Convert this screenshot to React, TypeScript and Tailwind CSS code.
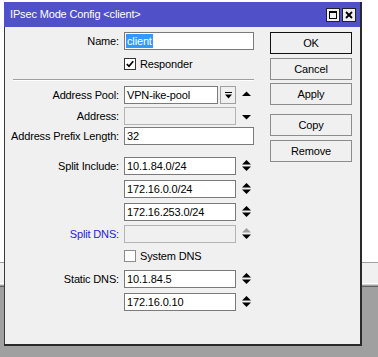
import React from "react";

const Up = ({ c = "#000" }: { c?: string }) => (
  <svg width="9" height="5" viewBox="0 0 9 5">
    <polygon points="0,5 4.5,0.5 9,5" fill={c} />
  </svg>
);
const Down = ({ c = "#000" }: { c?: string }) => (
  <svg width="9" height="5" viewBox="0 0 9 5">
    <polygon points="0,0 4.5,4.5 9,0" fill={c} />
  </svg>
);
const Pair = ({ up = "#000", down = "#000" }: { up?: string; down?: string }) => (
  <svg width="9" height="11" viewBox="0 0 9 11">
    <polygon points="0,4.5 4.5,0 9,4.5" fill={up} />
    <polygon points="0,6.5 4.5,11 9,6.5" fill={down} />
  </svg>
);

function Row({
  label,
  labelClass = "text-black",
  children,
  className = "",
}: {
  label?: string;
  labelClass?: string;
  children: React.ReactNode;
  className?: string;
}) {
  return (
    <div className={"flex items-center h-[18px] " + className}>
      <div className={"w-[114px] text-right whitespace-nowrap " + labelClass}>{label}</div>
      <div className="ml-[5px] flex items-center h-[18px]">{children}</div>
    </div>
  );
}

function Field({
  value,
  className = "w-[112px]",
  disabled = false,
}: {
  value?: string;
  className?: string;
  disabled?: boolean;
}) {
  return (
    <div
      className={
        "h-[18px] border pl-[2px] leading-[16px] whitespace-nowrap overflow-hidden " +
        (disabled ? "bg-[#f0f0f0] border-[#b4b4b4] " : "bg-white border-[#7a7a7a] ") +
        className
      }
    >
      {value}
    </div>
  );
}

function Btn({ label, className = "", def = false }: { label: string; className?: string; def?: boolean }) {
  return (
    <div
      className={
        "h-[22px] w-[82px] flex items-center justify-center bg-[#f0f0f0] border " +
        (def ? "border-[#111]" : "border-[#8c8c8c]") +
        " " +
        className
      }
    >
      {label}
    </div>
  );
}

function Check({ checked, label, dark }: { checked: boolean; label: string; dark?: boolean }) {
  return (
    <div className="flex items-center">
      <div
        className={
          "w-[12px] h-[12px] bg-white border flex items-center justify-center " +
          (dark ? "border-[#333]" : "border-[#8c8c8c]")
        }
      >
        {checked && (
          <svg width="8" height="8" viewBox="0 0 8 8">
            <path d="M0.8 4 L3 6.3 L7.2 1.2" stroke="#000" strokeWidth="1.7" fill="none" />
          </svg>
        )}
      </div>
      <span className="ml-[4px]">{label}</span>
    </div>
  );
}

export default function App() {
  return (
    <div className="relative w-[378px] h-[357px] overflow-hidden font-['Liberation_Sans',Arial,sans-serif] text-[11px] tracking-[-0.15px] text-black">
      {/* desktop behind */}
      <div className="flex flex-col w-full h-full">
        <div className="h-[262px] bg-white" />
        <div className="h-px bg-[#a0a0a0]" />
        <div className="h-[20px] bg-[#f0f0f0]" />
        <div className="h-px bg-white" />
        <div className="h-px bg-[#d4d4d4]" />
        <div className="h-px bg-[#a0a0a0]" />
        <div className="h-px bg-[#5f5f5f]" />
        <div className="flex-1 bg-[#a0a0a0]" />
      </div>

      {/* window */}
      <div className="absolute left-[4px] top-[2px] w-[358px] h-[344px] flex flex-col border-r-2 border-b-2 border-[#2a2a2a]">
        <div className="h-[25px] bg-[#5050c8] flex items-center pl-[6px] pr-[4px]">
          <span className="text-white flex-1 whitespace-nowrap">IPsec Mode Config &lt;client&gt;</span>
          <div className="flex gap-[2px]">
            <div className="w-[14px] h-[14px] bg-[#f0f0f0] border border-[#222] flex items-center justify-center">
              <svg width="8" height="8" viewBox="0 0 8 8">
                <rect x="0.5" y="0.5" width="7" height="7" fill="none" stroke="#000" strokeWidth="1" />
                <rect x="0" y="0" width="8" height="2" fill="#000" />
              </svg>
            </div>
            <div className="w-[14px] h-[14px] bg-[#f0f0f0] border border-[#222] flex items-center justify-center">
              <svg width="8" height="8" viewBox="0 0 8 8">
                <path d="M1 1 L7 7 M7 1 L1 7" stroke="#000" strokeWidth="1.8" />
              </svg>
            </div>
          </div>
        </div>

        <div className="flex-1 bg-[#f0f0f0] border-l border-[#3a3a3a] flex">
          {/* form */}
          <div className="w-[265px] flex flex-col">
            <Row label="Name:" className="mt-[5px]">
              <div className="h-[18px] w-[130px] border border-[#7a7a7a] bg-white pl-[1px] flex items-center">
                <span className="bg-[#3399ff] text-white leading-[14px] px-[1px]">client</span>
              </div>
            </Row>
            <Row className="mt-[5px]">
              <Check checked label="Responder" dark />
            </Row>
            <div className="mt-[6px] ml-[8px] w-[241px]">
              <div className="h-px bg-[#a0a0a0]" />
              <div className="h-px bg-white" />
            </div>
            <Row label="Address Pool:" className="mt-[5px]">
              <Field value="VPN-ike-pool" className="w-[94px]" />
              <div className="ml-[2px] h-[18px] w-[16px] border border-[#a0a0a0] bg-[#f0f0f0] flex items-center justify-center">
                <svg width="7" height="7" viewBox="0 0 7 7">
                  <rect x="0" y="0" width="7" height="1" fill="#000" />
                  <polygon points="0,2.5 7,2.5 3.5,6.5" fill="#000" />
                </svg>
              </div>
              <div className="ml-[6px] -mt-[3px]">
                <Up />
              </div>
            </Row>
            <Row label="Address:" className="mt-[3px]">
              <Field disabled />
              <div className="ml-[6px] mt-[3px]">
                <Down />
              </div>
            </Row>
            <Row label="Address Prefix Length:" className="mt-[2px]">
              <Field value="32" className="w-[130px]" />
            </Row>
            <Row label="Split Include:" className="mt-[12px]">
              <Field value="10.1.84.0/24" />
              <div className="ml-[6px] -mt-[1px]">
                <Pair />
              </div>
            </Row>
            <Row className="mt-[5px]">
              <Field value="172.16.0.0/24" />
              <div className="ml-[6px] -mt-[1px]">
                <Pair />
              </div>
            </Row>
            <Row className="mt-[5px]">
              <Field value="172.16.253.0/24" />
              <div className="ml-[6px] -mt-[1px]">
                <Pair />
              </div>
            </Row>
            <Row label="Split DNS:" labelClass="text-[#2323e6]" className="mt-[4px]">
              <Field disabled />
              <div className="ml-[6px] -mt-[1px]">
                <Pair up="#a0a0a0" />
              </div>
            </Row>
            <Row className="mt-[4px]">
              <Check checked={false} label="System DNS" />
            </Row>
            <Row label="Static DNS:" className="mt-[5px]">
              <Field value="10.1.84.5" />
              <div className="ml-[6px] -mt-[1px]">
                <Pair />
              </div>
            </Row>
            <Row className="mt-[5px]">
              <Field value="172.16.0.10" />
              <div className="ml-[6px] -mt-[1px]">
                <Pair />
              </div>
            </Row>
          </div>

          {/* buttons */}
          <div className="w-[82px] flex flex-col">
            <Btn label="OK" def className="mt-[5px]" />
            <Btn label="Cancel" className="mt-[4px]" />
            <Btn label="Apply" className="mt-[3px]" />
            <Btn label="Copy" className="mt-[9px]" />
            <Btn label="Remove" className="mt-[4px]" />
          </div>
        </div>
      </div>
    </div>
  );
}
